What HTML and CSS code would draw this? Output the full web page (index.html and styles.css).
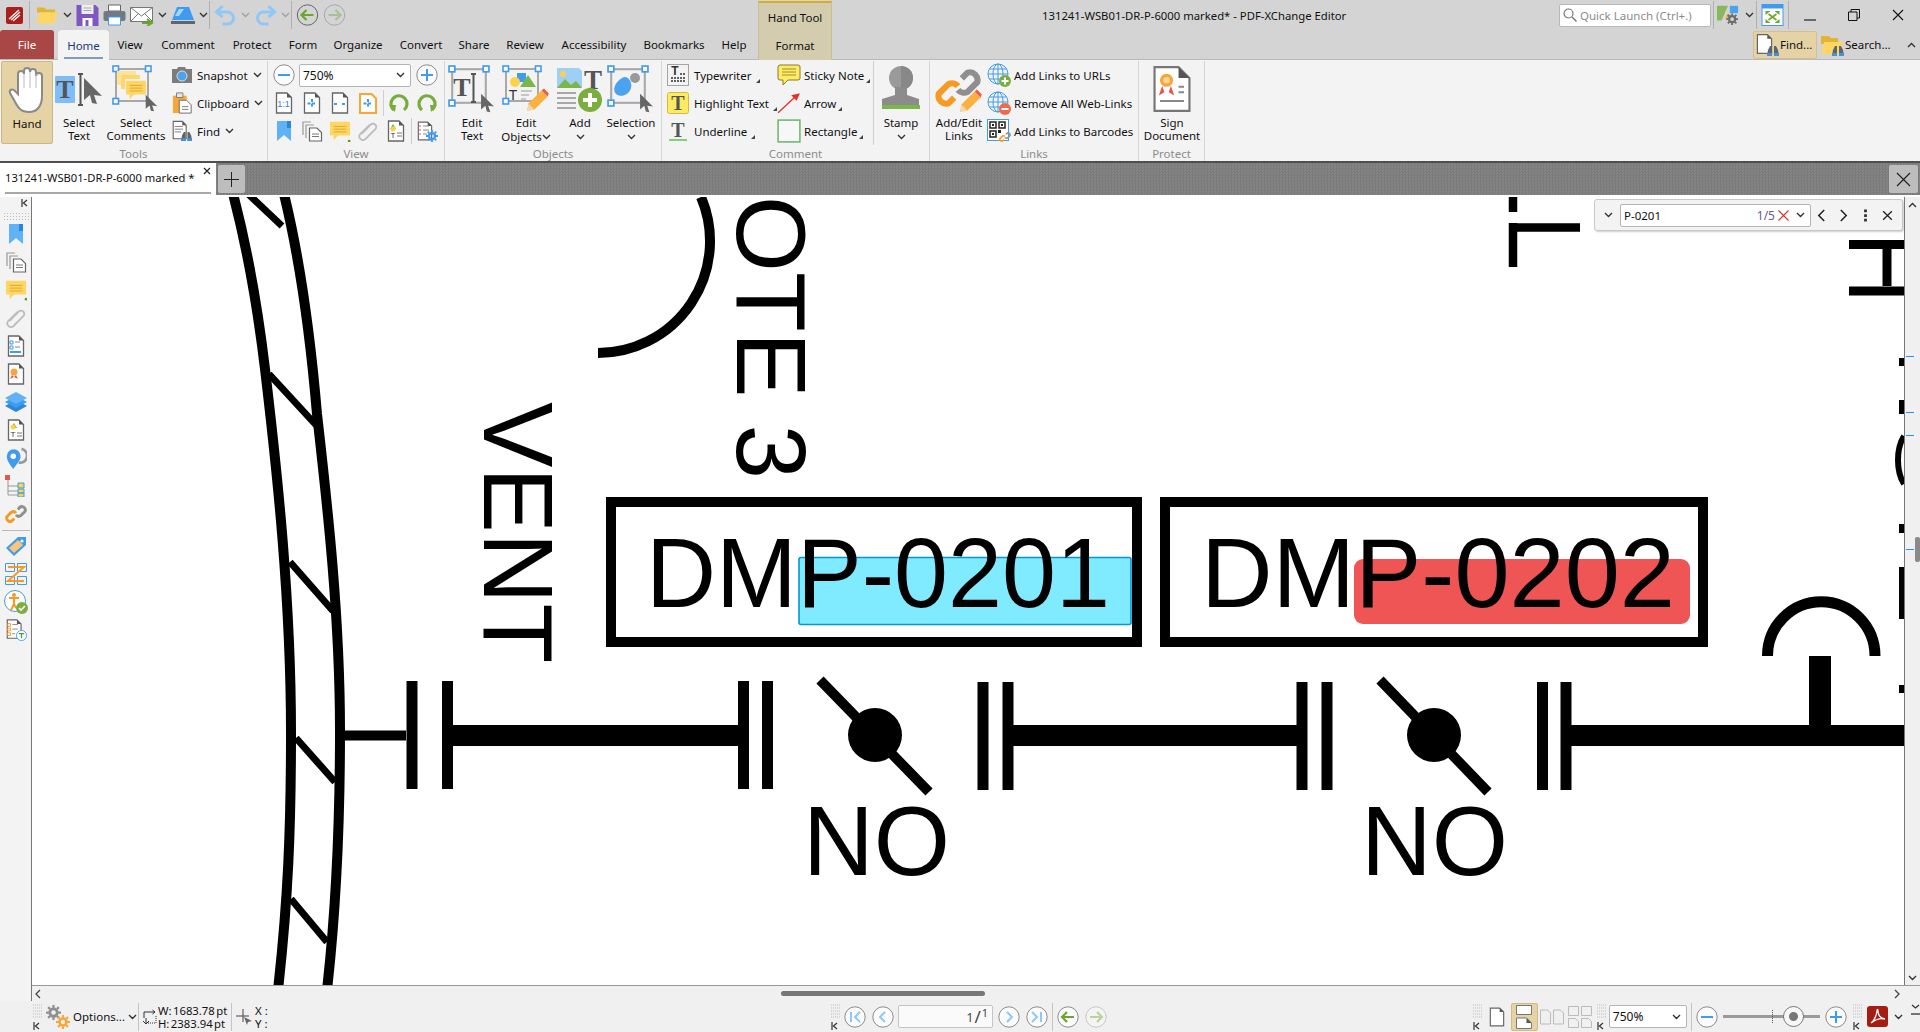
FILE: index.html
```html
<!DOCTYPE html>
<html lang="en">

<head>
  <meta charset="UTF-8">
  <meta name="viewport" content="width=device-width, initial-scale=1.0">
  <title>131241-WSB01-DR-P-6000 marked* - PDF-XChange Editor</title>
  <link rel="stylesheet" href="styles.css">
</head>

<body>
  <!-- shared icon parts -->
  <svg class="sprite" width="0" height="0">
    <defs>
      <symbol id="chev" viewBox="0 0 9 6"><path d="M1 1l3.5 3.5L8 1" fill="none" stroke="#333" stroke-width="1.4"/></symbol>
      <symbol id="cur" viewBox="0 0 20 28"><path d="M1 1l18 18-8-1 3 9-5-1-2-8-6 5z" fill="#666"/></symbol>
      <symbol id="frame" viewBox="0 0 40 40"><rect x="4" y="4" width="32" height="32" fill="none" stroke="#a8a8a8" stroke-width="2"/><g fill="#fff" stroke="#3f9bef" stroke-width="1.6"><rect x="1" y="1" width="5.5" height="5.5"/><rect x="33.5" y="1" width="5.5" height="5.5"/><rect x="1" y="33.5" width="5.5" height="5.5"/></g></symbol>
      <symbol id="doc" viewBox="0 0 18 22"><path d="M1.5 1H12l4.500 4.500V21H1.500z" fill="#fff" stroke="#666" stroke-width="1.300"/><path d="M12 1l4.500 4.500H12z" fill="#555"/></symbol>
      <symbol id="bino" viewBox="0 0 12 12"><path d="M1 5l2-4h2v10H0zM11 5L9 1H7v10h5z" fill="#5c6670"/><path d="M0 8h5v3H0zM7 8h5v3H7z" fill="#4b8ed1"/></symbol>
      <symbol id="note" viewBox="0 0 24 22"><path d="M2 1h20a1 1 0 0 1 1 1v13a1 1 0 0 1-1 1H10l-5 5v-5H2a1 1 0 0 1-1-1V2a1 1 0 0 1 1-1z" fill="#fcd765"/><path d="M5 6h14M5 9h14M5 12h14" stroke="#e0a526" stroke-width="1"/></symbol>
      <symbol id="clip" viewBox="0 0 24 24"><path d="M5 15l10-10a3.500 3.500 0 0 1 5 5L9 21a4 4 0 0 1-6-5L14 5" fill="none" stroke="#bdbdbd" stroke-width="2"/></symbol>
      <symbol id="pages" viewBox="0 0 22 22"><path d="M2 15V2h8M5 18V5h8" fill="none" stroke="#999" stroke-width="1.200"/><path d="M8.500 8H16l4.500 4.500V21h-12z" fill="#fff" stroke="#666" stroke-width="1.200"/><path d="M11 14h7M11 16.500h7" stroke="#777"/></symbol>
      <symbol id="bookmark" viewBox="0 0 16 22"><path d="M1 1h14v20l-7-6-7 6z" fill="#5fb2f6"/><path d="M11 1h4v7h-4z" fill="#2a86dc"/></symbol>
      <symbol id="link" viewBox="0 0 24 24"><path d="M10 17l-3 3a4 4 0 0 1-5-5l5-5a4 4 0 0 1 5 1" fill="none" stroke="#f59a23" stroke-width="3.200"/><path d="M14 7l3-3a4 4 0 0 1 5 5l-5 5a4 4 0 0 1-5-1" fill="none" stroke="#8f8f8f" stroke-width="3.200"/></symbol>
      <symbol id="pencil" viewBox="0 0 20 20"><path d="M13 2l5 5L7 18l-6 1 1-6z" fill="#fbb040"/><path d="M13 2l2-1.500 4 4L18 7z" fill="#ef5b4c"/><path d="M1 19l1-6 5 5z" fill="#f5d6b0"/></symbol>
      <symbol id="globe" viewBox="0 0 24 24"><g fill="none" stroke="#3f9bef" stroke-width="1"><circle cx="11" cy="11" r="10"/><ellipse cx="11" cy="11" rx="5" ry="10"/><path d="M1 11h20M2.500 6h17M2.500 16h17M11 1v20"/></g></symbol>
      <symbol id="gear" viewBox="0 0 16 16"><circle cx="8" cy="8" r="4" fill="none" stroke="currentColor" stroke-width="3"/><path d="M8 0v3M8 13v3M0 8h3M13 8h3M2.300 2.300l2 2M11.700 11.700l2 2M2.300 13.700l2-2M11.700 4.300l2-2" stroke="currentColor" stroke-width="2.400"/></symbol>
      <symbol id="grip" viewBox="0 0 9 16"><path d="M0 1h9M0 4h9M0 7h9M0 10h9M0 13h9" stroke="#bbb" stroke-dasharray="1 1"/></symbol>
      <symbol id="collapse" viewBox="0 0 7 8"><path d="M1 0v8M6 1L2.500 4 6 7" fill="none" stroke="#333" stroke-width="1.200"/></symbol>
      <symbol id="ring" viewBox="0 0 22 22"><circle cx="11" cy="11" r="10.200" fill="#fbfbfb" stroke="#8c8c8c" stroke-width="1"/></symbol>
    </defs>
  </svg>

  <div class="app">

    <!-- title bar -->
    <header class="titlebar">
      <div class="qat">
        <svg class="q q-logo" viewBox="0 0 17 17"><rect width="17" height="17" rx="2" fill="#a81f1c"/><path d="M3 12L13 3M5 13l9-8M7 14l7-6" stroke="#fff" stroke-width="1.200"/></svg>
        <i class="qsep"></i>
        <svg class="q q-w23" viewBox="0 0 23 19"><path d="M1 2h7l2 2h9v3H1z" fill="#e4b332"/><path d="M4 7h18l-4 11H0z" fill="#fdd663"/></svg>
        <svg class="cv"><use href="#chev"/></svg>
        <svg class="q q-w23" viewBox="0 0 22 22"><path d="M0 1h19l3 3v18H0z" fill="#7e57c2"/><path d="M5 1h12v9H5z" fill="#eee"/><path d="M7 4h8M7 6.500h8" stroke="#aaa"/><path d="M6 14h10v8H6z" fill="#fff"/><path d="M9 16h3v6H9z" fill="#7e57c2"/></svg>
        <svg class="q q-w23" viewBox="0 0 22 22"><path d="M5 1h12v6H5z" fill="#fff" stroke="#666"/><rect y="7" width="22" height="10" rx="2" fill="#6f7a84"/><path d="M5 13h12v8H5z" fill="#fff" stroke="#3f9bef"/></svg>
        <svg class="q q-w24" viewBox="0 0 24 22"><path d="M.5 3.500h22v14H.5z" fill="#fff" stroke="#777"/><path d="M.5 3.500L11.500 12l11-8.500M.5 17.500l8-8M22.500 17.500l-8-8" fill="none" stroke="#777"/><path d="M12 19h8M17 15l5 4-5 3" fill="none" stroke="#69a52a" stroke-width="2"/></svg>
        <svg class="cv"><use href="#chev"/></svg>
        <svg class="q q-w24" viewBox="0 0 24 22"><path d="M6 3h12l5 13H1z" fill="#3f9bef"/><path d="M8 5h5L8 12H4z" fill="#a6d4fb"/><path d="M0 17h24v3H0z" fill="#5c6670"/></svg>
        <svg class="cv"><use href="#chev"/></svg>
        <i class="qsep qsep-tight"></i>
        <svg class="q q-w23" viewBox="0 0 22 22"><path d="M8 2L2 8l6 5M3 8h10a6 6 0 0 1 0 12H8" fill="none" stroke="#90c7f5" stroke-width="3"/></svg>
        <svg class="cv cv-dim"><use href="#chev"/></svg>
        <svg class="q q-w23" viewBox="0 0 22 22"><path d="M14 2l6 6-6 5M19 8H9a6 6 0 0 0 0 12h5" fill="none" stroke="#90c7f5" stroke-width="3"/></svg>
        <svg class="cv cv-dim"><use href="#chev"/></svg>
        <i class="qsep qsep-tight"></i>
        <svg class="q q-w23" viewBox="0 0 22 22"><circle cx="11" cy="11" r="10.200" fill="none" stroke="#666"/><path d="M17 11H6M10 6l-5 5 5 5" fill="none" stroke="#6aa72c" stroke-width="2.200"/></svg>
        <svg class="q q-w23 dim" viewBox="0 0 22 22"><circle cx="11" cy="11" r="10.200" fill="none" stroke="#666"/><path d="M5 11h11M12 6l5 5-5 5" fill="none" stroke="#6aa72c" stroke-width="2.200"/></svg>
      </div>
      <div class="doc-title">131241-WSB01-DR-P-6000 marked* - PDF-XChange Editor</div>
      <div class="win">
        <div class="quick">
          <svg class="quick-glass" viewBox="0 0 14 14"><circle cx="5.500" cy="5.500" r="4.500" fill="none" stroke="#777" stroke-width="1.200"/><path d="M9 9l4.500 4.500" stroke="#777" stroke-width="1.400"/></svg>
          Quick Launch (Ctrl+.)
        </div>
        <i class="qsep"></i>
        <svg class="q q-w24" viewBox="0 0 24 24"><path d="M0 2h12L5 18H0z" fill="#8ab75c"/><path d="M14 2h9v8h-9z" fill="#4aa3f0"/><path d="M11 11h3l-1 5H9z" fill="#f4a63a"/><g color="#6c6c6c"><use href="#gear" x="10" y="10" width="13" height="13"/></g></svg>
        <svg class="cv"><use href="#chev"/></svg>
        <i class="qsep"></i>
        <svg class="q q-w23 q-full" viewBox="0 0 22 22"><rect x=".5" y=".5" width="21" height="21" fill="#fff" stroke="#3f9bef"/><path d="M.5.5h21v4H.5z" fill="#3f9bef"/><path d="M9 7l-5 0 0 4zM13 7l5 0 0 4zM9 19H4v-4zM13 19h5v-4z" fill="#6aa72c"/><path d="M7 10l8 6M15 10l-8 6" stroke="#6aa72c" stroke-width="1.600"/></svg>
        <i class="qsep"></i>
        <div class="winbtns">
          <svg viewBox="0 0 12 12"><path d="M0 11h12" stroke="#111" stroke-width="1.100"/></svg>
          <svg viewBox="0 0 12 12"><path d="M.5 3h8.500v8.500H.5zM3 3V.5h8.500V9H9" fill="none" stroke="#111"/></svg>
          <svg viewBox="0 0 12 12"><path d="M1 1l10 10M11 1L1 11" stroke="#111" stroke-width="1.100"/></svg>
        </div>
      </div>
    </header>

    <!-- ribbon tabs -->
    <nav class="tabrow">
      <div class="tabs">
        <a class="tab tab-file">File</a>
        <a class="tab tab-on">Home</a>
        <a class="tab">View</a>
        <a class="tab">Comment</a>
        <a class="tab">Protect</a>
        <a class="tab">Form</a>
        <a class="tab">Organize</a>
        <a class="tab">Convert</a>
        <a class="tab">Share</a>
        <a class="tab">Review</a>
        <a class="tab">Accessibility</a>
        <a class="tab">Bookmarks</a>
        <a class="tab">Help</a>
        <a class="tab tab-format">Format</a>
      </div>
      <div class="tabrow-right">
        <div class="tabtool tabtool-on">
          <svg class="ic24" viewBox="0 0 24 24"><use href="#doc" x="1" y="0" width="17" height="22"/><use href="#bino" x="12" y="12" width="12" height="12"/></svg>
          Find...
        </div>
        <div class="tabtool">
          <svg class="ic24" viewBox="0 0 24 24"><path d="M1 3h8l2 2h7v6H1z" fill="#e4b332"/><path d="M4 9h19l-3 12H1z" fill="#fdd663"/><use href="#bino" x="12" y="12" width="12" height="12"/></svg>
          Search...
        </div>
        <svg class="cv cv-up"><use href="#chev"/></svg>
      </div>
    </nav>
    <div class="context-tab">Hand Tool</div>

    <!-- ribbon -->
    <section class="ribbon">

      <div class="group g-tools">
        <div class="group-body">
          <div class="big b-hand">
            <div class="big-ic">
              <svg class="ic48" viewBox="-6 0 48 48"><path d="M9 26V8a3 3 0 0 1 6 0V5a3 3 0 0 1 6 0v1a3 3 0 0 1 6 0v4a3 3 0 0 1 6 0v20c0 10-5 16-13 16-8 0-11-4-15-12l-4-7c-1-3 2-5 5-2l3 3z" fill="#fff" stroke="#8a8a8a" stroke-width="2"/><path d="M15 8v14M21 6v16M27 8v14" stroke="#bbb"/></svg>
            </div>
            <span>Hand</span>
          </div>
          <div class="big b-seltext">
            <div class="big-ic">
              <svg class="ic48" viewBox="0 0 48 48"><rect x="0" y="11" width="20" height="27" rx="1" fill="#7ebdf5"/><text x="10" y="33" class="svg-t" font-size="26" text-anchor="middle">T</text><path d="M23 9h5M23 40h5M25.500 9v31" stroke="#555" stroke-width="2"/><use href="#cur" x="28" y="12" width="20" height="28"/></svg>
            </div>
            <span>Select<br>Text</span>
          </div>
          <div class="big b-selcom">
            <div class="big-ic">
              <svg class="ic48" viewBox="0 0 48 48"><use href="#frame" x="0" y="0" width="40" height="40"/><path d="M5 6h19v4H9v10H5z" fill="#fde29a"/><path d="M9 10h19v4H13v10H9z" fill="#fdd76d"/><use href="#note" x="13" y="13" width="22" height="24"/><use href="#cur" x="32" y="29" width="15" height="18"/></svg>
            </div>
            <span>Select<br>Comments</span>
          </div>
          <div class="smallcol c-tools">
            <div class="small">
              <svg class="ic22" viewBox="0 0 22 18"><path d="M1 3h5l1-2h7l1 2h6v14H1z" fill="#7c7c7c"/><circle cx="11" cy="10" r="5" fill="#4aa3f0" stroke="#ddd"/></svg>
              <span>Snapshot</span><svg class="cv"><use href="#chev"/></svg>
            </div>
            <div class="small">
              <svg class="ic22" viewBox="0 0 22 24"><path d="M1 4h15v19H1z" fill="#f7a63a"/><path d="M5 1h7v5H5z" fill="#e6e6e6" stroke="#777"/><path d="M8 9h8l5 5v9H8z" fill="#fff" stroke="#666"/><path d="M11 16h7M11 19h7" stroke="#777"/></svg>
              <span>Clipboard</span><svg class="cv"><use href="#chev"/></svg>
            </div>
            <div class="small">
              <svg class="ic22" viewBox="0 0 22 24"><use href="#doc" x="0" y="0" width="17" height="22"/><path d="M3 7h9M3 10h9M3 13h7" stroke="#777"/><use href="#bino" x="10" y="12" width="12" height="12"/></svg>
              <span>Find</span><svg class="cv"><use href="#chev"/></svg>
            </div>
          </div>
        </div>
        <div class="group-label">Tools</div>
      </div>

      <div class="group g-view">
        <div class="group-body view-rows">
          <div class="vrow">
            <svg class="ic22" viewBox="0 0 22 22"><use href="#ring"/><path d="M5 11h12" stroke="#3f9bef" stroke-width="2"/></svg>
            <div class="combo combo-view">750%<svg class="cv"><use href="#chev"/></svg></div>
            <svg class="ic22" viewBox="0 0 22 22"><use href="#ring"/><path d="M5 11h12M11 5v12" stroke="#3f9bef" stroke-width="2"/></svg>
          </div>
          <div class="vrow">
            <svg class="ic22" viewBox="0 0 22 22"><use href="#doc" x="2" y="0" width="18" height="22"/><text x="10.500" y="15" class="svg-s svg-blue" font-size="9" text-anchor="middle">1:1</text></svg>
            <svg class="ic22" viewBox="0 0 22 22"><use href="#doc" x="2" y="0" width="18" height="22"/><path d="M11 7v9M6.500 11.500h9" stroke="#3f9bef" stroke-width="2" stroke-dasharray="3 1.500"/></svg>
            <svg class="ic22" viewBox="0 0 22 22"><use href="#doc" x="2" y="0" width="18" height="22"/><path d="M5 12h3M13 12h3" stroke="#3f9bef" stroke-width="2"/></svg>
            <svg class="ic22" viewBox="0 0 22 22"><path d="M2 1h13l5 5v16H2z" fill="#f7a63a"/><path d="M4 3h10l4 4v13H4z" fill="#fff"/><path d="M11 7v9M6.500 11.500h9" stroke="#3f9bef" stroke-width="2" stroke-dasharray="3 1.500"/></svg>
            <i class="vsep"></i>
            <svg class="ic22" viewBox="0 0 22 22"><path d="M6 18a8 8 0 1 1 10 0" fill="none" stroke="#79ad3b" stroke-width="3.200"/><path d="M1 13l7 0-1 7z" fill="#79ad3b"/></svg>
            <svg class="ic22" viewBox="0 0 22 22"><path d="M6 18a8 8 0 1 1 10 0" fill="none" stroke="#79ad3b" stroke-width="3.200"/><path d="M21 13l-7 0 1 7z" fill="#79ad3b"/></svg>
          </div>
          <div class="vrow">
            <svg class="ic22" viewBox="0 0 22 22"><use href="#bookmark" x="3" y="0" width="16" height="22"/></svg>
            <svg class="ic22" viewBox="0 0 22 22"><use href="#pages"/></svg>
            <svg class="ic22" viewBox="0 0 24 24"><use href="#note"/><circle cx="22" cy="23" r="1.500" fill="#5c9a22"/></svg>
            <svg class="ic22" viewBox="0 0 24 24"><use href="#clip"/></svg>
            <svg class="ic22" viewBox="0 0 22 22"><use href="#doc" x="2" y="0" width="18" height="22"/><path d="M8 4l3 5H5z" fill="#7ab648"/><circle cx="8" cy="9" r="2.500" fill="#fcd24a"/><text x="8" y="18" class="svg-s" font-size="8" text-anchor="middle">T</text><path d="M12 13h5M12 16h5" stroke="#777"/></svg>
            <i class="vsep"></i>
            <svg class="ic22" viewBox="0 0 22 22"><use href="#doc" x="1" y="0" width="16" height="22"/><path d="M3 6h2M3 10h2M3 14h2" stroke="#e2574c"/><path d="M7 6h6M7 10h6M7 14h4" stroke="#888"/><g color="#3f9bef"><use href="#gear" x="10" y="10" width="12" height="12"/></g></svg>
          </div>
        </div>
        <div class="group-label">View</div>
      </div>

      <div class="group g-objects">
        <div class="group-body">
          <div class="big b-edittext">
            <div class="big-ic">
              <svg class="ic48" viewBox="0 0 48 48"><use href="#frame" x="0" y="0" width="42" height="42"/><text x="14" y="31" class="svg-t" font-size="26" text-anchor="middle">T</text><path d="M23 9h5M23 37h5M25.500 9v28" stroke="#555" stroke-width="2"/><use href="#cur" x="31" y="28" width="17" height="20"/></svg>
            </div>
            <span>Edit<br>Text</span>
          </div>
          <div class="big b-editobj">
            <div class="big-ic">
              <svg class="ic48" viewBox="0 0 48 48"><use href="#frame" x="0" y="0" width="40" height="40"/><rect x="15" y="8" width="9" height="9" fill="#3f9bef"/><path d="M18 22l8-12 8 12z" fill="#7ab648"/><circle cx="13" cy="17" r="5" fill="#fcd24a"/><text x="11" y="35" class="svg-s" font-size="14" text-anchor="middle">T</text><path d="M19 26h11M19 30h8M19 34h5" stroke="#999"/><use href="#pencil" x="24" y="23" width="24" height="24"/></svg>
            </div>
            <span>Edit<br>Objects<svg class="cv cv-inl"><use href="#chev"/></svg></span>
          </div>
          <div class="big b-add">
            <div class="big-ic">
              <svg class="ic48" viewBox="0 0 48 48"><path d="M1 3h22l3 3v17H1z" fill="#9ed0f5"/><circle cx="7" cy="9" r="3" fill="#fcd24a"/><path d="M1 23l8-9 6 6 5-4 6 7z" fill="#7ab648"/><text x="37" y="24" class="svg-t" font-size="27" text-anchor="middle">T</text><path d="M1 28h19M1 33h19M1 38h19M1 43h19" stroke="#a8a8a8" stroke-width="2"/><circle cx="34" cy="35" r="12" fill="#7cad3f"/><path d="M27 35h14M34 28v14" stroke="#fff" stroke-width="4"/></svg>
            </div>
            <span>Add<br><svg class="cv"><use href="#chev"/></svg></span>
          </div>
          <div class="big b-selection">
            <div class="big-ic">
              <svg class="ic48" viewBox="0 0 48 48"><use href="#frame" x="0" y="0" width="42" height="42"/><circle cx="28" cy="13" r="5" fill="#999"/><path d="M15 13c5-4 11 4 9 10-2 7-10 10-15 6-4-4-1-12 6-16z" fill="#4aa3f0"/><use href="#cur" x="31" y="28" width="17" height="20"/></svg>
            </div>
            <span>Selection<br><svg class="cv"><use href="#chev"/></svg></span>
          </div>
        </div>
        <div class="group-label">Objects</div>
      </div>

      <div class="group g-comment">
        <div class="group-body">
          <div class="smallcol c-com1">
            <div class="small">
              <svg class="ic22" viewBox="0 0 22 22"><rect x=".5" y=".5" width="21" height="21" fill="none" stroke="#555" stroke-dasharray="1 1"/><text x="8" y="11" class="svg-s" font-size="12" font-weight="700" text-anchor="middle">T</text><path d="M13 10h6M4 14h15M4 17h15" stroke="#333" stroke-width="1.400" stroke-dasharray="2 1"/></svg>
              <span>Typewriter</span><i class="corner"></i>
            </div>
            <div class="small">
              <svg class="ic22" viewBox="0 0 22 22"><rect x=".5" y=".5" width="21" height="21" rx="2" fill="#fdeb63" stroke="#d9b93a"/><text x="11" y="18" class="svg-t" font-size="20" text-anchor="middle">T</text></svg>
              <span>Highlight Text</span><i class="corner"></i>
            </div>
            <div class="small">
              <svg class="ic22" viewBox="0 0 22 22"><text x="11" y="17" class="svg-t" font-size="20" text-anchor="middle">T</text><path d="M2 20h18" stroke="#4cc04a" stroke-width="1.400"/></svg>
              <span>Underline</span><i class="corner"></i>
            </div>
          </div>
          <div class="smallcol c-com2">
            <div class="small">
              <svg class="ic24" viewBox="0 0 24 22"><path d="M3 1h18a2 2 0 0 1 2 2v11a2 2 0 0 1-2 2H11l-5 5v-5H3a2 2 0 0 1-2-2V3a2 2 0 0 1 2-2z" fill="#fdeb63" stroke="#8a7a2a"/><path d="M5 5h14M5 8h14M5 11h14" stroke="#8a7a2a" stroke-width=".8"/></svg>
              <span>Sticky Note</span><i class="corner"></i>
            </div>
            <div class="small">
              <svg class="ic24" viewBox="0 0 22 22"><path d="M1 20L17 5" stroke="#e2312d" stroke-width="1.200"/><path d="M21 2l-8 2 5 5z" fill="#e2312d"/></svg>
              <span>Arrow</span><i class="corner"></i>
            </div>
            <div class="small">
              <svg class="ic24" viewBox="0 0 22 22"><rect x="1" y="1" width="20" height="20" fill="#f7f7f7" stroke="#6eb56c" stroke-width="1.400"/></svg>
              <span>Rectangle</span><i class="corner"></i>
            </div>
          </div>
          <i class="group-sep"></i>
          <div class="big b-stamp">
            <div class="big-ic">
              <svg class="ic40" viewBox="0 0 40 48"><circle cx="20" cy="13" r="12" fill="#9a9a9a"/><path d="M20 1a12 12 0 0 1 0 24z" fill="#888"/><path d="M14 22h12v8l12 4v6H1v-6l13-4z" fill="#8c8c8c"/><path d="M1 40h38v4H1z" fill="#7ab648"/></svg>
            </div>
            <span>Stamp<br><svg class="cv"><use href="#chev"/></svg></span>
          </div>
        </div>
        <div class="group-label">Comment</div>
      </div>

      <div class="group g-links">
        <div class="group-body">
          <div class="big b-addlinks">
            <div class="big-ic">
              <svg class="ic48" viewBox="0 0 48 48"><use href="#link" x="0" y="0" width="46" height="46"/><use href="#pencil" x="24" y="24" width="24" height="24"/></svg>
            </div>
            <span>Add/Edit<br>Links</span>
          </div>
          <div class="smallcol c-links">
            <div class="small">
              <svg class="ic24" viewBox="0 0 24 24"><use href="#globe"/><circle cx="18" cy="18" r="6" fill="#7cad3f"/><path d="M14.500 18h7M18 14.500v7" stroke="#fff" stroke-width="2"/></svg>
              <span>Add Links to URLs</span>
            </div>
            <div class="small">
              <svg class="ic24" viewBox="0 0 24 24"><use href="#globe"/><circle cx="18" cy="18" r="6" fill="#ef6a4c"/><path d="M14.500 18h7" stroke="#fff" stroke-width="2"/></svg>
              <span>Remove All Web-Links</span>
            </div>
            <div class="small">
              <svg class="ic24" viewBox="0 0 24 24"><rect x=".5" y=".5" width="21" height="21" fill="#fff" stroke="#3f9bef"/><path d="M3 3h6v6H3zM12 3h6v6h-6zM3 12h6v6H3z" fill="none" stroke="#222" stroke-width="1.500"/><path d="M5 5h2v2H5zM14 5h2v2h-2zM5 14h2v2H5zM11 11h3v3h-3z" fill="#222"/><use href="#link" x="12" y="12" width="12" height="12"/></svg>
              <span>Add Links to Barcodes</span>
            </div>
          </div>
        </div>
        <div class="group-label">Links</div>
      </div>

      <div class="group g-protect">
        <div class="group-body">
          <div class="big b-sign">
            <div class="big-ic">
              <svg class="ic40" viewBox="0 0 36 44"><path d="M2 2h22l10 10v30H2z" fill="#fff" stroke="#777" stroke-width="2"/><path d="M24 2l10 10H24z" fill="#555"/><circle cx="13" cy="14" r="6" fill="#f7a63a"/><circle cx="13" cy="14" r="3" fill="#f4d49a"/><path d="M9 19l-3 9 5-3zM17 19l3 9-5-3z" fill="#e2574c"/><path d="M24 20h5M24 25h5M7 33h22" stroke="#888" stroke-width="1.800"/></svg>
            </div>
            <span>Sign<br>Document</span>
          </div>
        </div>
        <div class="group-label">Protect</div>
      </div>
    </section>

    <!-- document tabs -->
    <div class="docbar">
      <div class="doctab">
        <span>131241-WSB01-DR-P-6000 marked *</span>
        <svg class="doctab-x" viewBox="0 0 8 8"><path d="M1 1l6 6M7 1L1 7" stroke="#222" stroke-width="1.200"/></svg>
      </div>
      <div class="docbtn"><svg viewBox="0 0 15 15"><path d="M0 7.500h15M7.500 0v15" stroke="#222"/></svg></div>
      <div class="docbtn docbtn-close"><svg viewBox="0 0 15 15"><path d="M1 1l13 13M14 1L1 14" stroke="#222" stroke-width="1.200"/></svg></div>
    </div>

    <!-- workspace -->
    <div class="work">
      <aside class="sidepanel">
        <svg class="side-collapse"><use href="#collapse"/></svg>
        <div class="side-grip"></div>
        <svg class="side-ic" viewBox="0 0 22 22"><use href="#bookmark" x="3" y="0" width="16" height="22"/></svg>
        <svg class="side-ic" viewBox="0 0 22 22"><use href="#pages"/></svg>
        <svg class="side-ic" viewBox="0 0 24 24"><use href="#note"/><circle cx="23" cy="22" r="1.500" fill="#5c9a22"/></svg>
        <svg class="side-ic" viewBox="0 0 24 24"><use href="#clip"/></svg>
        <svg class="side-ic" viewBox="0 0 22 22"><use href="#doc" x="2" y="0" width="18" height="22"/><path d="M5 6h3v3H5zM5 11h3v3H5z" fill="none" stroke="#3f9bef"/><path d="M10 7h5M10 12h5" stroke="#888"/><path d="M5 16h11v2H5z" fill="#3f9bef"/></svg>
        <svg class="side-ic" viewBox="0 0 22 22"><use href="#doc" x="2" y="0" width="18" height="22"/><circle cx="9" cy="9" r="3.500" fill="#f7a63a"/><path d="M7 12l-2 4 4-2zM11 12l2 4-4-2z" fill="#e2574c"/></svg>
        <svg class="side-ic" viewBox="0 0 22 22"><path d="M11 9l11 6-11 6L0 15z" fill="#2a86dc"/><path d="M11 5l11 6-11 6L0 11z" fill="#3f9bef"/><path d="M11 1l11 6-11 6L0 7z" fill="#5fb2f6"/></svg>
        <svg class="side-ic" viewBox="0 0 22 22"><use href="#doc" x="2" y="0" width="18" height="22"/><path d="M9 4l3 5H6z" fill="#7ab648"/><circle cx="8" cy="8" r="2.500" fill="#fcd24a"/><text x="8" y="18" class="svg-s" font-size="8" text-anchor="middle">T</text><path d="M12 14h5M12 17h5" stroke="#777"/></svg>
        <svg class="side-ic" viewBox="0 0 22 24"><path d="M14 17a7 7 0 1 0 3-15" fill="none" stroke="#999" stroke-width="3"/><path d="M8 24C3 17 1 14 1 10a7.500 7.500 0 0 1 15 0c0 4-3 7-8 14z" fill="#3f9bef"/><circle cx="8" cy="10" r="3" fill="#fff"/></svg>
        <svg class="side-ic" viewBox="0 0 22 22"><rect x="0" y="0" width="5" height="5" fill="#e2574c"/><path d="M3 5v15h10M3 11h10M3 16h10" fill="none" stroke="#999"/><path d="M13 8h6v5h-6zM13 14h6v4h-6zM13 18h6v4h-6z" fill="#fcd24a" stroke="#3f9bef"/></svg>
        <svg class="side-ic" viewBox="0 0 24 24"><use href="#link"/></svg>
        <i class="side-sep"></i>
        <svg class="side-ic" viewBox="0 0 22 22"><path d="M1 13L13 2h8v8L9 21z" fill="#3f9bef"/><path d="M4 13l9-8 5 5-9 8z" fill="#fbc67c"/><circle cx="17" cy="6" r="1.600" fill="#fff"/></svg>
        <svg class="side-ic" viewBox="0 0 22 22"><path d="M.5.500h9v8h-9zM12.500.500h9v8h-9zM.5 13.500h9v8h-9zM12.500 13.500h9v8h-9z" fill="none" stroke="#3f9bef"/><path d="M3 4h16L3 18h16" fill="none" stroke="#f59a23" stroke-width="2"/></svg>
        <svg class="side-ic side-ic-lg" viewBox="0 0 24 24"><circle cx="11" cy="11" r="10.500" fill="#fff" stroke="#3f9bef"/><circle cx="10" cy="5" r="2" fill="#f59a23"/><path d="M5 8h10M10 8v6l-3 6M10 14l2 4" fill="none" stroke="#f59a23" stroke-width="2"/><circle cx="18" cy="18" r="6" fill="#7cad3f"/><path d="M15 18l2 2 4-4" fill="none" stroke="#fff" stroke-width="1.600"/></svg>
        <svg class="side-ic" viewBox="0 0 24 24"><use href="#doc" x="1" y="0" width="18" height="22"/><path d="M3 5h3v3H3zM3 10h3v3H3zM3 15h3v3H3z" fill="none" stroke="#f59a23"/><path d="M8 6h6M8 11h6M8 16h3" stroke="#888"/><circle cx="18" cy="18" r="5.500" fill="#fff" stroke="#3f9bef"/><path d="M15 16h6M18 16v5" stroke="#5c9a22" stroke-width="1.400"/></svg>
      </aside>

      <div class="canvas-col">
        <div class="page-row">
          <main class="page">
            <!-- the drawing, coordinates are screen pixels -->
            <svg class="drawing" viewBox="32 197 1872 788">
              <rect x="799" y="557.500" width="332" height="67" rx="2" fill="#80eaff" stroke="#0099d4" stroke-width="1.600"/>
              <rect x="1354" y="559" width="336" height="65" rx="9" fill="#f05555"/>
              <g fill="none" stroke="#000">
                <path d="M232 190C248 250 258 310 265 369C277 470 291 600 291 733C291 830 288 900 278 990" stroke-width="10"/>
                <path d="M283 190C298 250 309 320 317 414C328 510 340 620 340 731C340 830 336 910 327 990" stroke-width="10"/>
                <path d="M245 191L282 226M269 374L316 425M290 562L333 611M296 738L335 782M291 899L327 942" stroke-width="7"/>
                <path d="M598 353A112 112 0 0 0 701 197" stroke-width="10"/>
                <rect x="611" y="502" width="526" height="140" stroke-width="10"/>
                <rect x="1165" y="502" width="538" height="140" stroke-width="10"/>
                <path d="M340 735.500H406" stroke-width="10"/>
                <path d="M450 735.500H740M1010 735.500H1300M1568 735.500H1904" stroke-width="21"/>
                <path d="M412 681V789M447.500 681V789M743.500 681V789M767.500 681V789M983 682V790M1008 682V790M1302 682V790M1327 682V790M1542.500 682V790M1566 682V790" stroke-width="11"/>
                <path d="M820 680L929 792M1380 680L1488 792" stroke-width="10"/>
                <path d="M1767.500 656A53.500 54 0 0 1 1875 656" stroke-width="11"/>
                <path d="M1820 656V725" stroke-width="22"/>
                <path d="M1513 197V212M1513 223V267M1509 227.500H1580" stroke-width="8.500"/>
                <path d="M1849 244.500H1904M1849 291H1904M1887 249V286" stroke-width="9"/>
                <path d="M1899 358H1904V366H1899zM1899 400H1904V414H1899zM1899 524H1904V533H1899zM1899 567H1904V619H1899zM1899 685H1904V693H1899z" fill="#000" stroke="none"/>
                <path d="M1904 436C1899 444 1898 452 1898 460C1898 468 1899 476 1904 484" stroke-width="6"/>
              </g>
              <circle cx="875" cy="735" r="27"/>
              <circle cx="1434" cy="735" r="27"/>
              <text x="646" y="607" class="dwg" textLength="464" lengthAdjust="spacingAndGlyphs">DMP-0201</text>
              <text x="1201" y="607" class="dwg" textLength="474" lengthAdjust="spacingAndGlyphs">DMP-0202</text>
              <text x="803" y="875" class="dwg">NO</text>
              <text x="1361" y="875" class="dwg">NO</text>
              <text transform="translate(484 402) rotate(90)" class="dwg">VENT</text>
              <text transform="translate(737 479) rotate(90)" class="dwg" text-anchor="end">OTE 3</text>
            </svg>

            <div class="findbar">
              <svg class="cv"><use href="#chev"/></svg>
              <div class="find-input">
                <span class="find-text">P-0201</span>
                <span class="find-count">1/5</span>
                <svg class="find-x" viewBox="0 0 11 11"><path d="M.5.5l10 10M10.500.5l-10 10" stroke="#d9322e" stroke-width="1.100"/></svg>
                <svg class="cv"><use href="#chev"/></svg>
              </div>
              <div class="find-tools">
                <svg viewBox="0 0 8 12"><path d="M6.500 1L1.500 6l5 5" fill="none" stroke="#222" stroke-width="1.400"/></svg>
                <svg viewBox="0 0 8 12"><path d="M1.500 1l5 5-5 5" fill="none" stroke="#222" stroke-width="1.400"/></svg>
                <svg viewBox="0 0 8 12"><path d="M4 .5v2.500M4 4.800v2.500M4 9v2.500" stroke="#333" stroke-width="2.600"/></svg>
                <svg viewBox="0 0 10 12"><path d="M1 2l8 8M9 2l-8 8" stroke="#222" stroke-width="1.200"/></svg>
              </div>
            </div>
          </main>

          <div class="vscroll">
            <svg class="cv cv-up"><use href="#chev"/></svg>
            <i class="vtick vt1"></i><i class="vtick vt2"></i><i class="vtick vt3"></i><i class="vtick vt4"></i>
            <i class="vthumb"></i>
            <svg class="cv cv-down"><use href="#chev"/></svg>
          </div>
        </div>

        <div class="hscroll">
          <svg viewBox="0 0 6 10"><path d="M5 1L1 5l4 4" fill="none" stroke="#444" stroke-width="1.300"/></svg>
          <i class="hthumb"></i>
          <svg viewBox="0 0 6 10"><path d="M1 1l4 4-4 4" fill="none" stroke="#444" stroke-width="1.300"/></svg>
        </div>
      </div>
    </div>

    <!-- status bar -->
    <footer class="status">
      <div class="st st-left">
        <div class="st-grip"><svg class="grip"><use href="#grip"/></svg><svg class="coll"><use href="#collapse"/></svg></div>
        <svg class="ic24" viewBox="0 0 24 24"><g color="#8f8f8f"><use href="#gear" x="0" y="0" width="15" height="15"/></g><g color="#f7a63a"><use href="#gear" x="10" y="10" width="14" height="14"/></g></svg>
        <span class="st-options">Options...</span>
        <svg class="cv"><use href="#chev"/></svg>
        <i class="st-sep"></i>
        <svg class="st-size-ic" viewBox="0 0 14 16"><path d="M1 9V3h11M9.500 1L12 3 9.500 5" fill="none" stroke="#333"/><path d="M13 7v7H4" fill="none" stroke="#333" stroke-dasharray="1 1"/><path d="M3 9v6M0 12l3 3 3-3" fill="none" stroke="#333"/></svg>
        <div class="st-dims"><div>W: 1683.78 pt</div><div>H: 2383.94 pt</div></div>
        <i class="st-sep"></i>
        <svg class="st-cross" viewBox="0 0 16 16"><path d="M0 7h13M7 0v13" stroke="#444"/><path d="M8 8l8 4-4 1-1 3z" fill="#666"/></svg>
        <div class="st-xy"><div>X :</div><div>Y :</div></div>
      </div>
      <div class="st st-mid">
        <div class="st-grip"><svg class="grip"><use href="#grip"/></svg><svg class="coll"><use href="#collapse"/></svg></div>
        <svg class="ic22" viewBox="0 0 22 22"><use href="#ring"/><path d="M7 6v10M16 6l-5 5 5 5" fill="none" stroke="#8ec8f6" stroke-width="2"/></svg>
        <svg class="ic22" viewBox="0 0 22 22"><use href="#ring"/><path d="M13 6l-5 5 5 5" fill="none" stroke="#8ec8f6" stroke-width="2"/></svg>
        <div class="page-input"><span>1</span><span class="page-slash">/</span><sup>1</sup></div>
        <svg class="ic22" viewBox="0 0 22 22"><use href="#ring"/><path d="M9 6l5 5-5 5" fill="none" stroke="#8ec8f6" stroke-width="2"/></svg>
        <svg class="ic22" viewBox="0 0 22 22"><use href="#ring"/><path d="M15 6v10M6 6l5 5-5 5" fill="none" stroke="#8ec8f6" stroke-width="2"/></svg>
        <i class="st-sep"></i>
        <svg class="ic22" viewBox="0 0 22 22"><use href="#ring"/><path d="M17 11H6M10 6l-5 5 5 5" fill="none" stroke="#6aa72c" stroke-width="2.200"/></svg>
        <svg class="ic22 dim" viewBox="0 0 22 22"><use href="#ring"/><path d="M5 11h11M12 6l5 5-5 5" fill="none" stroke="#6aa72c" stroke-width="2.200"/></svg>
      </div>
      <div class="st st-right">
        <div class="st-grip"><svg class="grip"><use href="#grip"/></svg><svg class="coll"><use href="#collapse"/></svg></div>
        <svg class="st-page" viewBox="0 0 16 22"><use href="#doc" width="16" height="22"/></svg>
        <div class="st-on"><svg viewBox="0 0 16 24"><path d="M.5.500h15v9H.5z" fill="#fff" stroke="#777"/><path d="M.5 13h10l5 5v5.500H.5z" fill="#fff" stroke="#777"/><path d="M10.500 13l5 5h-5z" fill="#555"/></svg></div>
        <svg class="st-two" viewBox="0 0 24 16"><path d="M.5 1h7l3 3v11h-10zM13.500 1h7l3 3v11h-10z" fill="none" stroke="#bbb"/></svg>
        <svg class="st-four" viewBox="0 0 24 22"><path d="M.5.500h10v9H.5zM13.500.500h10v9h-10zM.5 12.500h7l3 3v6h-10zM13.500 12.500h7l3 3v6h-10z" fill="none" stroke="#bbb"/></svg>
        <div class="st-grip st-grip2"><svg class="grip"><use href="#grip"/></svg><svg class="coll"><use href="#collapse"/></svg></div>
        <div class="combo combo-zoom">750%<svg class="cv"><use href="#chev"/></svg></div>
        <i class="st-sep"></i>
        <svg class="ic22" viewBox="0 0 22 22"><use href="#ring"/><path d="M5 11h12" stroke="#3f9bef" stroke-width="2"/></svg>
        <div class="slider"><i class="slider-tick"></i><i class="slider-knob"></i></div>
        <svg class="ic22" viewBox="0 0 22 22"><use href="#ring"/><path d="M5 11h12M11 5v12" stroke="#3f9bef" stroke-width="2"/></svg>
        <div class="st-grip st-grip3"><svg class="grip"><use href="#grip"/></svg><svg class="coll"><use href="#collapse"/></svg></div>
        <svg class="st-pdf" viewBox="0 0 21 21"><rect width="21" height="21" rx="3" fill="#a51d12"/><path d="M4 17c3-2 5-6 6-12 0-2 1-2 1 0 0 4 2 7 7 8-4-1-9 0-14 4z" fill="none" stroke="#fff" stroke-width="1.300"/></svg>
        <svg class="cv"><use href="#chev"/></svg>
        <svg class="st-end" viewBox="0 0 9 12"><path d="M1 1l3.500 3L8 1" fill="none" stroke="#333" stroke-width="1.300"/><path d="M0 10h9" stroke="#333" stroke-width="1.300"/></svg>
      </div>
    </footer>
  </div>
</body>

</html>
```

FILE: styles.css
```css
html, body {
  margin: 0;
  padding: 0;
  height: 100%;
  overflow: hidden;
}

body {
  background: #f3f3f3;
  color: #111;
  font-family: "Noto Sans", "Open Sans", sans-serif;
  font-size: 11.5px;
  line-height: 13px;
}

.sprite { position: absolute; }

.app {
  position: relative;
  width: 1920px;
  height: 1032px;
  display: flex;
  flex-direction: column;
}

svg { display: block; flex: none; overflow: hidden; }
i { display: block; flex: none; }
.dim { opacity: .4; }

.svg-t { font-family: "Liberation Serif", serif; font-weight: 700; fill: #555; }
.svg-s { font-family: "Liberation Sans", sans-serif; fill: #333; }
.svg-blue { fill: #2a86dc; }

/* small sizes */
.cv { width: 9px; height: 6px; }
.cv-dim { opacity: .3; }
.cv-up { transform: rotate(180deg); }
.cv-inl { display: inline-block; margin-left: 3px; vertical-align: 1px; }
.ic48 { width: 48px; height: 48px; }
.ic40 { width: 40px; height: 48px; }
.ic24 { width: 24px; height: 24px; }
.ic22 { width: 22px; height: 22px; }

/* title bar */
.titlebar {
  height: 30px;
  flex: none;
  background: #d4d4d4;
  display: flex;
  align-items: center;
}

.qat {
  width: 1042px;
  display: flex;
  align-items: center;
  gap: 4px;
  padding-left: 6px;
  box-sizing: border-box;
}

.q { height: 22px; }
.q-logo { width: 17px; height: 17px; }
.q-w23 { width: 23px; }
.q-w24 { width: 24px; }
.qsep { width: 1px; height: 28px; background: #b0b0b0; margin: 0 2px; }
.qsep-tight { margin: 0 0 0 -3px; }

.doc-title { font-size: 11.3px; white-space: nowrap; }

.win {
  margin-left: auto;
  display: flex;
  align-items: center;
  gap: 2px;
}

.win .qsep { margin: 0; }
.win .cv { margin-left: 3px; }
.q-full { margin: 0 2px; }

.quick {
  width: 152px;
  height: 23px;
  box-sizing: border-box;
  background: #fff;
  border: 1px solid #b8b8b8;
  border-radius: 2px;
  color: #8c8c8c;
  display: flex;
  align-items: center;
  gap: 3px;
  padding-left: 3px;
}

.quick-glass { width: 14px; height: 14px; }

.winbtns {
  width: 132px;
  margin-left: -3px;
  display: flex;
  justify-content: space-around;
}

.winbtns svg { width: 12px; height: 12px; }

/* tab row */
.tabrow {
  height: 30px;
  flex: none;
  background: #d4d4d4;
  display: flex;
  justify-content: space-between;
  box-sizing: border-box;
  border-bottom: 1px solid #b9b9b9;
}

.tabs {
  display: grid;
  grid-template-columns: 54px 55px 42px 74px 54px 48px 62px 64px 42px 60px 78px 82px 38px 79px;
  font-size: 11.5px;
}

.tab {
  display: flex;
  align-items: center;
  justify-content: center;
  height: 29px;
}

.tab-file {
  background: #a94746;
  color: #fff;
  border-radius: 3px 3px 0 0;
  width: 54px;
}

.tab-on {
  background: #f3f3f3;
  color: #1b3a78;
  border-radius: 4px 4px 0 0;
  margin-left: 4px;
  width: 51px;
  height: 30px;
  position: relative;
}

.tab-on::after {
  content: "";
  position: absolute;
  left: 6px;
  right: 6px;
  bottom: 1px;
  height: 2px;
  background: #7f9db9;
}

.tab-format {
  background: #d3ccae;
  height: 30px;
  width: 74px;
  box-sizing: border-box;
  margin-left: 5px;
  border-left: 1px solid #cbbf8e;
  border-right: 1px solid #cbbf8e;
}

/* the label above Format reaches into the title bar */
.context-tab {
  position: absolute;
  left: 758px;
  top: 1px;
  width: 74px;
  height: 29px;
  box-sizing: border-box;
  background: #d3ccae;
  border-top: 2px solid #d4ad2a;
  border-left: 1px solid #cbbf8e;
  border-right: 1px solid #cbbf8e;
  font-size: 11.5px;
  text-align: center;
  padding-top: 8px;
}

.tabrow-right {
  display: flex;
  align-items: center;
  padding-right: 4px;
  font-size: 11.5px;
}

.tabtool {
  height: 28px;
  display: flex;
  align-items: center;
  gap: 1px;
  width: 75px;
  box-sizing: border-box;
  padding-left: 1px;
  margin-right: 6px;
}

.tabtool-on {
  width: 64px;
  margin-right: 2px;
  background: #e5d3a5;
  border: 1px solid #d4c08a;
  border-radius: 2px;
}

.tabrow-right .cv { margin-left: 7px; }

/* ribbon */
.ribbon {
  height: 100px;
  flex: none;
  background: #f3f3f3;
  border-bottom: 2px solid #4f4f4f;
  display: flex;
  padding-top: 1px;
}

.group {
  display: flex;
  flex-direction: column;
  border-right: 1px solid #d6d6d6;
  box-sizing: border-box;
  height: 100px;
}

.g-tools { width: 268px; }
.g-view { width: 177px; }
.g-objects { width: 217px; }
.g-comment { width: 268px; }
.g-links { width: 209px; }
.g-protect { width: 66px; }

.group-body {
  display: flex;
  height: 85px;
}

.group-label {
  height: 15px;
  text-align: center;
  color: #8c8c8c;
  line-height: 16px;
}

.big {
  display: flex;
  flex-direction: column;
  align-items: center;
  text-align: center;
  flex: none;
  white-space: nowrap;
}

.big span { display: block; }
.big span .cv { margin: 5px auto 0; }

.big-ic {
  height: 55px;
  display: flex;
  align-items: center;
  justify-content: center;
}

.b-hand {
  width: 52px;
  height: 83px;
  box-sizing: border-box;
  margin-left: 1px;
  background: #e5d3a5;
  border: 1px solid #c9b988;
  border-radius: 2px;
}

.b-seltext { width: 48px; margin-left: 2px; }
.b-selcom { width: 56px; margin-left: 5px; }
.b-edittext { width: 48px; margin-left: 3px; }
.b-editobj { width: 52px; margin-left: 4px; }
.b-add { width: 48px; margin-left: 4px; }
.b-selection { width: 48px; margin-left: 3px; }
.b-stamp { width: 44px; margin-left: 5px; }
.b-addlinks { width: 48px; margin-left: 5px; }
.b-sign { width: 66px; }

.smallcol { display: flex; flex-direction: column; flex: none; }
.c-tools { margin-left: 7px; }
.c-com1 { margin-left: 5px; width: 110px; }
.c-com2 { width: 96px; }
.c-links { margin-left: 4px; }

.small {
  height: 28px;
  display: flex;
  align-items: center;
  gap: 4px;
  white-space: nowrap;
}

.c-tools .cv { margin-left: 1px; }
.c-com1 .small { gap: 5px; }
.c-com2 .small { gap: 3px; }
.c-links .small { gap: 3px; }

.corner {
  width: 0;
  height: 0;
  border-left: 4px solid transparent;
  border-bottom: 4px solid #444;
  align-self: flex-end;
  margin: 0 0 6px -1px;
}

.group-sep {
  width: 1px;
  height: 84px;
  background: #cfcfcf;
  margin: 0;
}

.view-rows { flex-direction: column; padding-left: 5px; }

.vrow {
  height: 28px;
  display: flex;
  align-items: center;
  gap: 6px;
}

.vsep { width: 1px; height: 26px; background: #cfcfcf; margin: 0 -2px; }

.combo {
  box-sizing: border-box;
  background: #fff;
  border: 1px solid #b5b5b5;
  border-radius: 2px;
  display: flex;
  align-items: center;
  justify-content: space-between;
  padding: 0 5px 0 3px;
  height: 23px;
  font-size: 12px;
}

.combo-view { width: 112px; margin: 0 -1px 0 -2px; }
.combo-zoom { width: 81px; }

/* document tab strip */
.docbar {
  height: 32px;
  flex: none;
  display: flex;
  align-items: flex-start;
  background: repeating-conic-gradient(#7a7a7a 0 25%, #858585 0 50%) 0 0 / 3px 3px;
  border-bottom: 2px solid #fff;
}

.doctab {
  width: 216px;
  height: 32px;
  box-sizing: border-box;
  background: #fff;
  padding: 8px 0 0 5px;
  position: relative;
  font-size: 11.2px;
  white-space: nowrap;
}

.doctab::after {
  content: "";
  position: absolute;
  left: 5px;
  right: 5px;
  bottom: 1px;
  height: 2px;
  background: #a8a8a8;
}

.doctab-x { position: absolute; right: 5px; top: 4px; width: 8px; height: 8px; }

.docbtn {
  width: 27px;
  height: 28px;
  margin: 2px 0 0 2px;
  background: #bdbdbd;
  border-radius: 2px;
  display: flex;
  align-items: center;
  justify-content: center;
}

.docbtn svg { width: 15px; height: 15px; }
.docbtn-close { margin-left: auto; margin-right: 2px; width: 29px; }

/* workspace */
.work {
  height: 804px;
  flex: none;
  display: flex;
}

.sidepanel {
  width: 31px;
  flex: none;
  background: #f3f3f3;
  border-right: 1px solid #777;
  display: flex;
  flex-direction: column;
  align-items: center;
  gap: 6px;
}

.side-collapse { width: 7px; height: 8px; margin: 2px 0 -1px 18px; }

.side-grip {
  width: 26px;
  height: 8px;
  margin-bottom: -3px;
  background: radial-gradient(#bbb 35%, transparent 40%) 0 0 / 3px 3px;
}

.side-ic { width: 22px; height: 22px; }
.side-ic-lg { width: 24px; height: 24px; margin: -1px 0 -1px; }
.side-sep { width: 28px; height: 1px; background: #bbb; margin: -1px 0 -2px; }

.canvas-col {
  flex: 1;
  min-width: 0;
  display: flex;
  flex-direction: column;
}

.page-row {
  height: 788px;
  flex: none;
  display: flex;
  border-bottom: 1px solid #999;
}

.page {
  position: relative;
  width: 1872px;
  height: 788px;
  background: #fff;
  overflow: hidden;
}

.drawing { width: 1872px; height: 788px; }

.dwg {
  font-family: "Liberation Sans", Arial, sans-serif;
  font-size: 98px;
  fill: #000;
}

.findbar {
  position: absolute;
  left: 1562px;
  top: 2px;
  width: 309px;
  height: 32px;
  box-sizing: border-box;
  background: #f3f3f3;
  border: 1px solid #c8c8c8;
  border-radius: 3px;
  box-shadow: 1px 1px 2px rgba(0, 0, 0, .2);
  display: flex;
  align-items: center;
  padding-left: 9px;
  gap: 7px;
}

.find-input {
  width: 191px;
  height: 23px;
  box-sizing: border-box;
  background: #fff;
  border: 1px solid #b5b5b5;
  border-radius: 2px;
  display: flex;
  align-items: center;
  padding: 0 5px 0 3px;
}

.find-text { color: #111; flex: 1; }
.find-count { color: #6a5a8a; margin-right: 3px; font-size: 12px; }
.find-x { width: 11px; height: 11px; margin-right: 7px; }

.find-tools {
  display: flex;
  align-items: center;
  gap: 11px;
  margin-left: -2px;
}

.find-tools svg { width: 11px; height: 13px; }

.vscroll {
  position: relative;
  flex: 1;
  background: #f0f0f0;
  border-left: 1px solid #777;
}

.vscroll .cv { position: absolute; left: 3px; }
.vscroll .cv-up { top: 5px; }
.vscroll .cv-down { bottom: 4px; }

.vtick { position: absolute; left: 1px; width: 8px; height: 1px; background: #1e90ff; }
.vt1 { top: 159px; }
.vt2 { top: 215px; }
.vt3 { top: 238px; }
.vt4 { top: 352px; }

.vthumb {
  position: absolute;
  left: 10px;
  top: 340px;
  width: 5px;
  height: 25px;
  background: #8a8a8a;
  border-radius: 2px;
}

.hscroll {
  height: 15px;
  flex: none;
  background: #f0f0f0;
  position: relative;
}

.hscroll svg { position: absolute; top: 3px; width: 6px; height: 10px; }
.hscroll svg:first-child { left: 3px; }
.hscroll svg:last-child { left: 1862px; }

.hthumb {
  position: absolute;
  left: 749px;
  top: 5px;
  width: 204px;
  height: 5px;
  background: #777;
  border-radius: 3px;
}

/* status bar */
.status {
  height: 31px;
  flex: none;
  background: #f0f0f0;
  display: grid;
  grid-template-columns: 831px 642px 447px;
  align-items: center;
}

.st { display: flex; align-items: center; height: 30px; }
.st-left { padding-left: 33px; box-sizing: border-box; }

.st-grip {
  width: 9px;
  height: 26px;
  flex: none;
  margin-right: 4px;
  display: flex;
  flex-direction: column;
  gap: 2px;
}

.grip { width: 9px; height: 16px; }
.coll { width: 7px; height: 8px; }

.st-options { margin: 0 5px 0 3px; width: 50px; white-space: nowrap; font-size: 11.5px; }
.st-sep { width: 1px; height: 28px; background: #c4c4c4; margin: 0 4px; flex: none; }
.st-left .st-sep { margin: 0 4px 0 1px; }
.st-size-ic { width: 14px; height: 16px; margin-right: 1px; }

.st-dims {
  width: 72px;
  color: #111;
  font-size: 11.3px;
  line-height: 13px;
  word-spacing: -1.5px;
  white-space: nowrap;
}

.st-cross { width: 16px; height: 16px; margin-right: 3px; }
.st-xy { font-size: 11.5px; }

.st-mid .ic22 + .ic22 { margin-left: 6px; }

.page-input {
  width: 95px;
  height: 23px;
  box-sizing: border-box;
  margin: 0 5px 0 4px;
  background: #fafafa;
  border: 1px solid #c4c4c4;
  border-radius: 2px;
  text-align: right;
  padding-right: 4px;
  line-height: 21px;
  font-size: 12px;
  color: #444;
}

.page-slash { font-size: 17px; margin: 0 1px; vertical-align: -1px; }
.page-input sup { font-size: 11px; line-height: 0; }

.st-page { width: 16px; height: 22px; margin: 0 6px 0 3px; }

.st-on {
  width: 28px;
  height: 28px;
  box-sizing: border-box;
  background: #e5d3a5;
  border: 1px solid #cfbb85;
  border-radius: 2px;
  display: flex;
  align-items: center;
  justify-content: center;
}

.st-on svg { width: 16px; height: 24px; }
.st-two { width: 24px; height: 16px; margin: 0 4px 0 2px; }
.st-four { width: 24px; height: 22px; margin-right: 5px; }
.st-grip2 { margin-right: 3px; }
.st-grip3 { margin-left: 6px; margin-right: 5px; }

.slider {
  width: 102px;
  height: 3px;
  margin: 0 5px;
  background: #9a9a9a;
  position: relative;
}

.slider-tick {
  position: absolute;
  left: 49px;
  top: -5px;
  width: 1px;
  height: 13px;
  border-left: 1px dotted #555;
}

.slider-knob {
  position: absolute;
  left: 60px;
  top: -9px;
  width: 21px;
  height: 21px;
  box-sizing: border-box;
  border-radius: 50%;
  background: radial-gradient(#777 0 4px, #f7f7f7 5px);
  border: 1px solid #777;
}

.st-pdf { width: 21px; height: 21px; margin-right: 6px; }
.st-end { width: 9px; height: 12px; margin: -14px 0 0 8px; }
```
